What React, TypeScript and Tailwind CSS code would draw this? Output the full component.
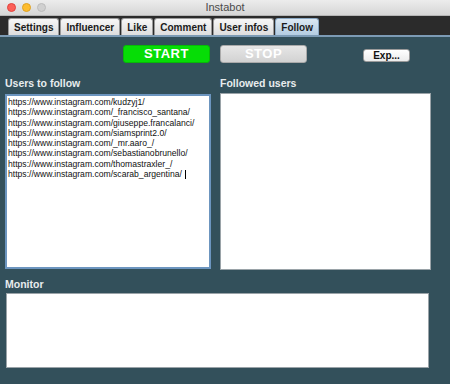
import React from "react";

const tabs = ["Settings", "Influencer", "Like", "Comment", "User infos", "Follow"];

const users = [
  "https://www.instagram.com/kudzyj1/",
  "https://www.instagram.com/_francisco_santana/",
  "https://www.instagram.com/giuseppe.francalanci/",
  "https://www.instagram.com/siamsprint2.0/",
  "https://www.instagram.com/_mr.aaro_/",
  "https://www.instagram.com/sebastianobrunello/",
  "https://www.instagram.com/thomastraxler_/",
  "https://www.instagram.com/scarab_argentina/",
];

export default function App() {
  return (
    <div
      className="w-[450px] h-[384px] flex flex-col overflow-hidden bg-[#33505b]"
      style={{ fontFamily: '"Liberation Sans", Arial, sans-serif' }}
    >
      {/* Title bar */}
      <div className="relative h-[16px] flex items-center bg-gradient-to-b from-[#ececec] to-[#d6d6d6] border-b border-[#b5b5b5]">
        <div className="flex items-center gap-[6px] pl-[7px]">
          <span className="w-[9px] h-[9px] rounded-full bg-[#fc5f57] border border-[#e0443e]" />
          <span className="w-[9px] h-[9px] rounded-full bg-[#fdbc2e] border border-[#dea123]" />
          <span className="w-[9px] h-[9px] rounded-full bg-[#d0d0d0] border border-[#bcbcbc]" />
        </div>
        <div className="absolute inset-0 flex items-center justify-center text-[11px] text-[#4a4a4a]">
          Instabot
        </div>
      </div>

      {/* Tabs */}
      <div className="h-[21px] flex items-end pl-[8px] bg-[#2b2b2b] border-b-2 border-[#7c9bb5]">
        {tabs.map((t) => {
          const active = t === "Follow";
          return (
            <div
              key={t}
              className={`h-[17px] px-[5px] mr-px flex items-center text-[10px] font-bold rounded-t-[3px] border border-b-0 ${
                active
                  ? "bg-gradient-to-b from-[#dbe8f3] to-[#b4cde2] border-[#8aa7c2] text-[#1a1a1a]"
                  : "bg-gradient-to-b from-[#f7f7f7] to-[#dedede] border-[#9a9a9a] text-[#1a1a1a]"
              }`}
            >
              {t}
            </div>
          );
        })}
      </div>

      {/* Buttons */}
      <div className="flex items-start mt-[8px] h-[18px]">
        <div className="ml-[123px] w-[87px] h-[18px] rounded-[3px] bg-[#06dd06] border border-[#08b808] flex items-center justify-center text-white text-[13px] font-bold tracking-[0.5px]">
          START
        </div>
        <div className="ml-[10px] w-[87px] h-[18px] rounded-[3px] bg-gradient-to-b from-[#e6e6e6] to-[#d2d2d2] border border-[#aaaaaa] flex items-center justify-center text-white text-[13px] font-bold tracking-[0.5px]">
          STOP
        </div>
        <div className="ml-[56px] mt-[4px] w-[47px] h-[13px] rounded-[3px] bg-gradient-to-b from-white to-[#ececec] border border-[#9a9a9a] flex items-center justify-center text-[10px] font-bold text-[#111]">
          Exp...
        </div>
      </div>

      {/* Lists */}
      <div className="flex mt-[13px] pl-[5px]">
        <div className="flex flex-col w-[206px]">
          <div className="h-[18px] text-[10.5px] font-bold text-[#e8ecee] leading-[14px]">Users to follow</div>
          <div className="h-[175px] bg-white border-2 border-[#6c95bf] px-[1px] pt-[1px] text-[8.6px] leading-[10.3px] text-[#111]">
            {users.map((u, i) => (
              <div key={u} className="whitespace-nowrap">
                {u}
                {i === users.length - 1 && (
                  <span className="inline-block w-px h-[9px] bg-black ml-[3px] align-middle" />
                )}
              </div>
            ))}
          </div>
        </div>
        <div className="flex flex-col w-[211px] ml-[9px]">
          <div className="h-[17px] text-[10.5px] font-bold text-[#e8ecee] leading-[14px]">Followed users</div>
          <div className="h-[177px] bg-white border border-[#9aa3a8]" />
        </div>
      </div>

      {/* Monitor */}
      <div className="flex flex-col mt-[8px] pl-[5px]">
        <div className="h-[15px] text-[10.5px] font-bold text-[#e8ecee] leading-[13px]">Monitor</div>
        <div className="ml-px w-[423px] h-[75px] bg-white border border-[#9aa3a8]" />
      </div>
    </div>
  );
}
